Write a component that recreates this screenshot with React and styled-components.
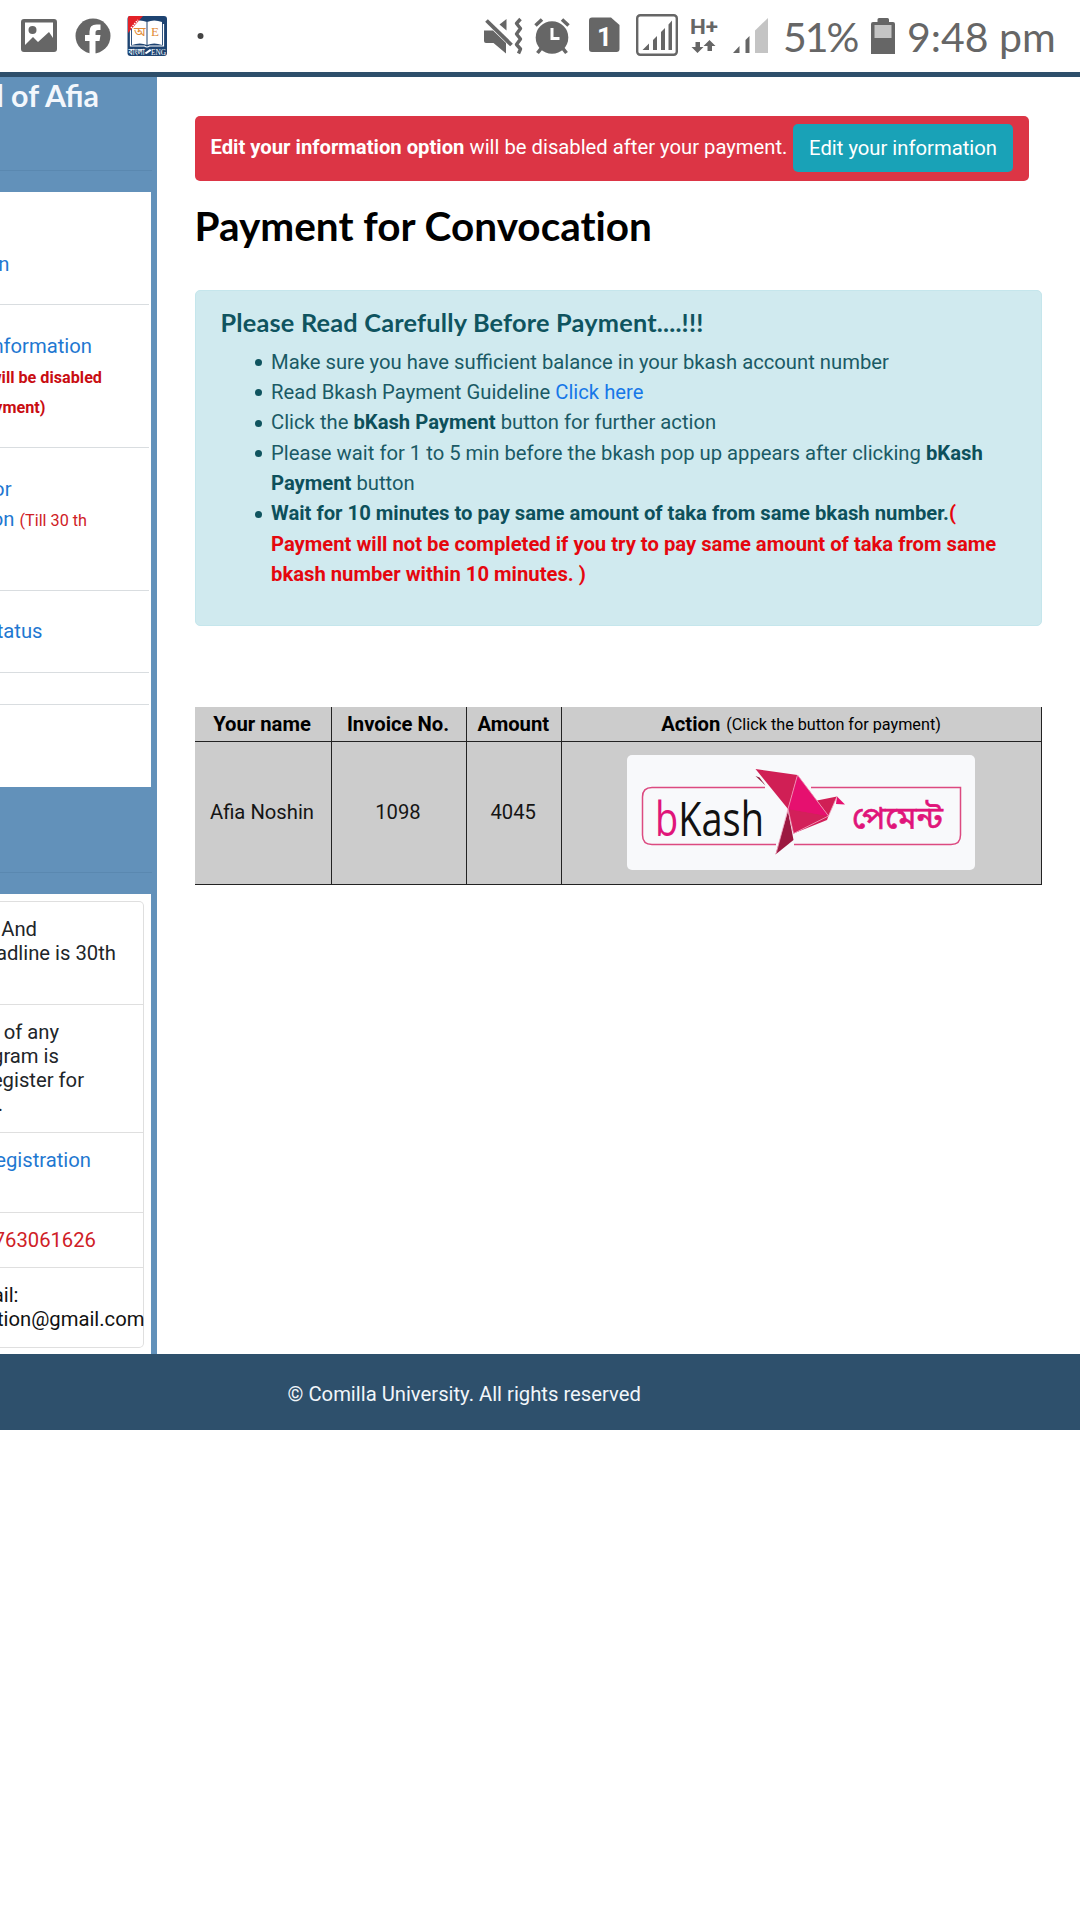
import React from "react";
import styled, { createGlobalStyle } from "styled-components";

const Global = createGlobalStyle`
  *, *::before, *::after { box-sizing: border-box; }
  html, body { margin: 0; padding: 0; background: #fff; }
  body {
    width: 1080px;
    height: 1920px;
    overflow: hidden;
    font-family: Roboto, "Noto Sans", sans-serif;
    font-size: 20.24px;
    line-height: 30.36px;
    color: #212529;
  }
`;

const Screen = styled.div`
  width: 1080px;
  height: 1920px;
  overflow: hidden;
  display: flex;
  flex-direction: column;
  background: #fff;
`;

/* ---------- status bar ---------- */
const StatusBar = styled.header`
  height: 72px;
  flex: none;
  display: flex;
  align-items: center;
`;
const Glyph = styled.svg`
  display: block;
  flex: none;
  margin-left: ${(p) => p.$gap || 0}px;
  fill: #666;
`;
const StatusText = styled.span`
  flex: none;
  display: block;
  width: ${(p) => p.$w}px;
  margin-left: ${(p) => p.$gap}px;
  font-family: Lato, sans-serif;
  font-size: 41px;
  line-height: 72px;
  padding-top: 2px;
  letter-spacing: ${(p) => p.$track || 0}px;
  white-space: nowrap;
  color: #666;
`;

function Icon({ x, w, gap, children }) {
  return (
    <Glyph $gap={gap} width={w} height={72} viewBox={`${x} 0 ${w} 72`} aria-hidden="true">
      {children}
    </Glyph>
  );
}

/* ---------- page frame ---------- */
const TopRule = styled.div`
  height: 5px;
  flex: none;
  background: #2e4f6b;
`;
const Body = styled.div`
  display: flex;
  height: 1277px;
  flex: none;
`;
const Footer = styled.footer`
  height: 76px;
  flex: none;
  background: #2e506c;
  color: #f1f6fa;
  padding: 25px 0 0 287.5px;
`;

/* ---------- sidebar ---------- */
const Sidebar = styled.aside`
  width: 157px;
  flex: none;
  background: #6291ba;
  overflow: hidden;
`;
const SideHead = styled.div`
  width: 152px;
  height: ${(p) => p.$h}px;
  border-bottom: 1px solid #5a88b0;
`;
const SideTitle = styled.h3`
  margin: 0;
  width: 99px;
  display: flex;
  justify-content: flex-end;
  font: 700 30.4px/36.4px Lato, sans-serif;
  color: #f3f7fc;
  white-space: pre;
`;
const Card = styled.div`
  width: 150.5px;
  height: ${(p) => p.$h}px;
  margin-top: 21px;
  background: #fff;
  padding-top: ${(p) => p.$top || 0}px;
`;
const MenuRow = styled.div`
  width: 149px;
  height: ${(p) => p.$h}px;
  padding-top: ${(p) => p.$top || 0}px;
  border-bottom: ${(p) => (p.$last ? "none" : "1px solid #d9dde0")};
`;
const NoticeList = styled.div`
  width: 144px;
  height: 447px;
  line-height: 24.1px;
  border: 1px solid #dfdfdf;
  border-left: none;
  border-radius: 0 5px 5px 0;
`;
const NoticeRow = styled.div`
  height: ${(p) => p.$h}px;
  padding-top: 15px;
  border-bottom: ${(p) => (p.$last ? "none" : "1px solid #dfdfdf")};
`;
const tones = { link: "#1f78d1", danger: "#cf2026", dark: "#212529", ink: "#111" };
const Line = styled.div`
  width: ${(p) => p.$end}px;
  display: flex;
  justify-content: flex-end;
  align-items: baseline;
  white-space: pre;
  color: ${(p) => tones[p.$tone || "dark"]};
`;
const Small = styled.span`
  font-size: 16.2px;
  font-weight: ${(p) => (p.$bold ? 700 : 400)};
  color: ${(p) => (p.$bold ? "#c90d12" : "#cf2026")};
`;
const SmallLines = styled.div`
  padding-top: 1.5px;
`;

/* ---------- main column ---------- */
const Main = styled.main`
  flex: 1;
  padding: 39px 38px 0 37.5px;
`;
const Alert = styled.div`
  width: 834.5px;
  height: 65px;
  padding: 8px 16px;
  display: flex;
  align-items: flex-start;
  justify-content: space-between;
  border-radius: 5px;
  background: #dc3545;
  color: #fff;
  white-space: nowrap;
`;
const AlertText = styled.span`
  padding-top: 8px;
`;
const InfoButton = styled.button`
  width: 220px;
  height: 48px;
  padding: 0;
  border: 0;
  border-radius: 5px;
  background: #19a2b7;
  color: #fff;
  font: inherit;
`;
const PageTitle = styled.h2`
  margin: 21px 0 39.5px;
  font: 700 40.5px/48.6px Lato, sans-serif;
  font-variant-ligatures: none;
  color: #000;
  white-space: nowrap;
`;
const Info = styled.section`
  height: 336px;
  padding: 16px 25px 0;
  border: 1px solid #c5e6ec;
  border-radius: 5px;
  background: #d0eaef;
  color: #1a5a65;
`;
const InfoTitle = styled.h4`
  margin: 0 0 9px;
  font: 700 25.3px/30.4px Lato, sans-serif;
  letter-spacing: 0.2px;
  color: #0f545f;
`;
const List = styled.ul`
  margin: 0;
  padding: 0 0 0 50.5px;
  list-style: none;
  white-space: nowrap;

  li::before {
    content: "";
    display: inline-block;
    width: 7px;
    height: 7px;
    margin: 0 9px 0 -16px;
    vertical-align: 2.5px;
    border-radius: 50%;
    background: #0f545f;
  }
`;
const Strong = styled.b`
  font-weight: 700;
  color: ${(p) => (p.$red ? "#e5070e" : "#0d505b")};
`;
const Link = styled.a`
  color: #1677e8;
`;
const AlertStrong = styled.b`
  font-weight: 700;
`;

const Table = styled.div`
  margin-top: 80.5px;
  width: 847.5px;
  display: grid;
  grid-template-columns: 137px 135px 95.5px 480px;
  grid-template-rows: 35px 143px;
  background: #ccc;
  color: #111;
  white-space: nowrap;
`;
const Cell = styled.div`
  display: flex;
  align-items: center;
  justify-content: center;
  border-right: 1.5px solid #222;
  border-bottom: 1.5px solid #222;
  font-weight: ${(p) => (p.$head ? 700 : 400)};
  color: ${(p) => (p.$head ? "#000" : "#151515")};
  padding: ${(p) => (p.$head ? "2px 1px 0 0" : "0 1px 0 0")};
`;
const Hint = styled.span`
  font-size: 16.2px;
  font-weight: 400;
  margin-left: 6px;
  padding-top: 2px;
`;
const PayButton = styled.button`
  width: 348px;
  height: 115px;
  padding: 0;
  border: 0;
  border-radius: 5px;
  background: #f8f9fb;
`;

function BkashLogo() {
  return (
    <svg width="348" height="115" viewBox="627 755 348 115" style={{ display: "block" }}>
      <path
        d="M765 787.5H652q-9.500 0-9.500 9.500v38q0 9.500 9.500 9.500h124M794 844.500h157q9.500 0 9.500-9.500v-47.500H811"
        fill="none"
        stroke="#dc4a80"
        strokeWidth="1.500"
      />
      <path d="M755.500 769l42 6-9.500 34z" fill="#d01f55" />
      <path d="M755.500 776l4 1.500 6 8z" fill="#8c1a3a" />
      <path d="M788 809l9.500-34 31 41-35 17.500z" fill="#e6106f" />
      <path d="M788 809l5.500 24.500L827 820l1.500-4z" fill="#d3205a" />
      <path d="M788 809l9.500-34 31 41z" fill="#e6106f" />
      <path d="M788 811l5.500 29-18 14.500z" fill="#9c1840" />
      <path d="M817 800.500l20-4-8.500 19.500z" fill="#d01f55" />
      <path d="M837 796.500l8 8-9-.500z" fill="#e6106f" />
      <path
        d="M797.500 775l-9.500 34 5.500 24.500L828.500 816l8.500-19.500M797.500 775l31 41M788 809l-12 45"
        fill="none"
        stroke="#f1a5bf"
        strokeWidth=".8"
      />
      <text
        x="655"
        y="836"
        fontFamily="'Open Sans', 'Noto Sans', sans-serif"
        fontSize="47"
        textLength="109"
        lengthAdjust="spacingAndGlyphs"
        fill="#111"
      >
        <tspan fill="#e0157a">b</tspan>Kash
      </text>
      <text
        x="852"
        y="829"
        fontFamily="'Noto Sans Bengali', 'Noto Serif Bengali', 'Lohit Bengali', FreeSerif, sans-serif"
        fontSize="32"
        textLength="91"
        lengthAdjust="spacingAndGlyphs"
        fill="#e0157a"
        stroke="#e0157a"
        strokeWidth=".6"
      >
        পেমেন্ট
      </text>
    </svg>
  );
}

function Status() {
  return (
    <StatusBar>
      <Icon x={21} w={36} gap={21}>
        <path
          fillRule="evenodd"
          d="M24 19h30q3 0 3 3v27q0 3-3 3H24q-3 0-3-3V22q0-3 3-3zM25 22.500V45l8-8 5 5 11-10 4 6V22.500z"
        />
        <circle cx="32.500" cy="30" r="4" />
      </Icon>
      <Icon x={75} w={36} gap={18}>
        <circle cx="93" cy="36" r="17.500" />
        <path
          fill="#fff"
          d="M89.500 54V41h-4.500v-6h4.500v-3.500q0-7 7-7h4v5.500h-2.500q-2.500 0-2.500 2.500V35h5l-1 6h-4v13z"
        />
      </Icon>
      <Icon x={127} w={40} gap={16}>
        <rect x="127.500" y="16" width="39.500" height="40" rx="3" fill="#1d4371" />
        <path d="M132 22q8-3 15 0 7-3 15 0v23q-8-3-15 0-7-3-15 0z" fill="#fff" />
        <path d="M130.500 24v22h14q2.500 2 5 0h14V24" fill="none" stroke="#fff" strokeWidth="1.200" />
        <path d="M147 22v23" stroke="#1d4371" strokeWidth="1" />
        <path d="M128 33V17.500q0-1.500 1.500-1.500H143z" fill="#e32127" />
        <path d="M131 28l7-8" stroke="#fff" strokeWidth="1.500" strokeDasharray="1.500 1" />
        <text x="134" y="36" fontFamily="'Noto Sans Bengali', FreeSerif, serif" fontSize="13" fill="#e08a34">অ</text>
        <text x="151" y="36" fontFamily="'Liberation Serif', serif" fontSize="13" fill="#e08a34">E</text>
        <text x="128.500" y="54.500" fontFamily="'Noto Sans Bengali', FreeSerif, serif" fontSize="9" textLength="16" lengthAdjust="spacingAndGlyphs" fill="#fff">বাংলা</text>
        <path d="M144.500 53l5.500-4 1.500 1.500-5 3.500z" fill="#fff" />
        <text x="151" y="54.500" fontFamily="'Liberation Serif', serif" fontSize="8.500" textLength="15" lengthAdjust="spacingAndGlyphs" fill="#fff">ENG</text>
      </Icon>
      <Icon x={197} w={7} gap={30}>
        <circle cx="200.500" cy="36" r="3" fill="#444" />
      </Icon>

      <Icon x={484} w={39} gap={280}>
        <path d="M484 30.500h9L506 43v10.500L493.500 43H486q-2 0-2-2z" />
        <path d="M499.500 24.500l7-5.500v11.500z" />
        <path d="M486.500 20.500l25 24.500" stroke="#666" strokeWidth="3.800" />
        <path
          d="M520.500 19l-4 4.500 4 5-4 5.500 4 5-4 5.500 4 4.500-2 4.500"
          fill="none"
          stroke="#666"
          strokeWidth="3.400"
          strokeLinejoin="round"
        />
      </Icon>
      <Icon x={534} w={36} gap={11}>
        <circle cx="552" cy="37.500" r="16.300" />
        <path d="M535.500 25.500l6.500-6M568.500 25.500l-6.500-6M541.500 48l-4 5M562.500 48l4 5" stroke="#666" strokeWidth="3.600" />
        <path d="M552 28v10.500h7.500" fill="none" stroke="#fff" strokeWidth="3" />
      </Icon>
      <Icon x={589} w={31} gap={19}>
        <path d="M592 17.500h19l8.500 7.500v24q0 3-3 3H592q-3 0-3-3v-28.500q0-3 3-3z" />
        <text x="597" y="45.500" fontFamily="Roboto, sans-serif" fontWeight="700" fontSize="26" fill="#fff">1</text>
      </Icon>
      <Icon x={636} w={42} gap={16}>
        <rect x="637.200" y="15.200" width="39.600" height="39.600" rx="3" fill="none" stroke="#666" strokeWidth="2.400" />
        <path d="M642.500 50l6.500-6.500V50zM653 40l4-4v14h-4zM661 32l4-4v22h-4zM668.500 24.500l3.500-4V50h-3.500z" />
      </Icon>
      <Icon x={691} w={27} gap={13}>
        <text x="690" y="34" fontFamily="Roboto, sans-serif" fontWeight="700" fontSize="21" textLength="28" lengthAdjust="spacingAndGlyphs">H+</text>
        <path d="M695.500 42h4.500v5h3.500l-6 6-6-6h4zM707.500 51h4.500v-5h3.500l-6-6-6 6h4z" />
      </Icon>
      <Icon x={732} w={36} gap={14}>
        <path d="M733 53l6.500-7v7zM745.500 40l4-4v17h-4z" />
        <path d="M755 30.500L768 18v35h-13z" fill="#c4c4c4" />
      </Icon>
      <StatusText $w={78} $gap={15} $track={-2}>51%</StatusText>
      <Icon x={871} w={24} gap={10}>
        <path d="M877.500 22v-2.500q0-1.500 1.500-1.500h8.500q1.500 0 1.500 1.500V22h4q2 0 2 2v30h-24V24q0-2 2-2z" />
        <path d="M874.500 25h17v13h-17z" fill="#c4c4c4" />
      </Icon>
      <StatusText $w={170} $gap={12} $track={0}>9:48 pm</StatusText>
    </StatusBar>
  );
}

export default function App() {
  return (
    <Screen>
      <Global />
      <Status />
      <TopRule />
      <Body>
        <Sidebar>
          <SideHead $h={94}>
            <SideTitle>d of Afia</SideTitle>
          </SideHead>
          <Card $h={595}>
            <MenuRow $h={113} $top={57}>
              <Line $end={9.5} $tone="link">n</Line>
            </MenuRow>
            <MenuRow $h={143} $top={26}>
              <Line $end={92} $tone="link">nformation</Line>
              <SmallLines>
                <Line $end={102}><Small $bold>will be disabled</Small></Line>
                <Line $end={45.5}><Small $bold>yment)</Small></Line>
              </SmallLines>
            </MenuRow>
            <MenuRow $h={143} $top={25.5}>
              <Line $end={11.5} $tone="link">or</Line>
              <Line $end={87} $tone="link">on <Small>(Till 30 th</Small></Line>
            </MenuRow>
            <MenuRow $h={82} $top={25}>
              <Line $end={42.5} $tone="link">tatus</Line>
            </MenuRow>
            <MenuRow $h={32} />
            <MenuRow $h={82} $last />
          </Card>
          <SideHead $h={86} />
          <Card $h={460} $top={7}>
            <NoticeList>
              <NoticeRow $h={103}>
                <Line $end={37}>And</Line>
                <Line $end={116}>adline is 30th</Line>
              </NoticeRow>
              <NoticeRow $h={128}>
                <Line $end={59}>of any</Line>
                <Line $end={59}>gram is</Line>
                <Line $end={84}>egister for</Line>
                <Line $end={3}>.</Line>
              </NoticeRow>
              <NoticeRow $h={79.5}>
                <Line $end={91} $tone="link">egistration</Line>
              </NoticeRow>
              <NoticeRow $h={55}>
                <Line $end={96} $tone="danger">763061626</Line>
              </NoticeRow>
              <NoticeRow $h={79} $last>
                <Line $end={18.5} $tone="ink">ail:</Line>
                <Line $end={144.5} $tone="ink">tion@gmail.com</Line>
              </NoticeRow>
            </NoticeList>
          </Card>
        </Sidebar>

        <Main>
          <Alert>
            <AlertText>
              <AlertStrong>Edit your information option</AlertStrong> will be disabled after your payment.
            </AlertText>
            <InfoButton>Edit your information</InfoButton>
          </Alert>
          <PageTitle>Payment for Convocation</PageTitle>
          <Info>
            <InfoTitle>Please Read Carefully Before Payment....!!!</InfoTitle>
            <List>
              <li>Make sure you have sufficient balance in your bkash account number</li>
              <li>Read Bkash Payment Guideline <Link>Click here</Link></li>
              <li>Click the <Strong>bKash Payment</Strong> button for further action</li>
              <li>
                Please wait for 1 to 5 min before the bkash pop up appears after clicking <Strong>bKash</Strong>
                <br />
                <Strong>Payment</Strong> button
              </li>
              <li>
                <Strong>Wait for 10 minutes to pay same amount of taka from same bkash number.</Strong>
                <Strong $red>
                  (<br />
                  Payment will not be completed if you try to pay same amount of taka from same
                  <br />
                  bkash number within 10 minutes. )
                </Strong>
              </li>
            </List>
          </Info>
          <Table>
            <Cell $head>Your name</Cell>
            <Cell $head>Invoice No.</Cell>
            <Cell $head>Amount</Cell>
            <Cell $head>
              Action <Hint>(Click the button for payment)</Hint>
            </Cell>
            <Cell>Afia Noshin</Cell>
            <Cell>1098</Cell>
            <Cell>4045</Cell>
            <Cell>
              <PayButton aria-label="bKash payment">
                <BkashLogo />
              </PayButton>
            </Cell>
          </Table>
        </Main>
      </Body>
      <Footer>© Comilla University. All rights reserved</Footer>
    </Screen>
  );
}
